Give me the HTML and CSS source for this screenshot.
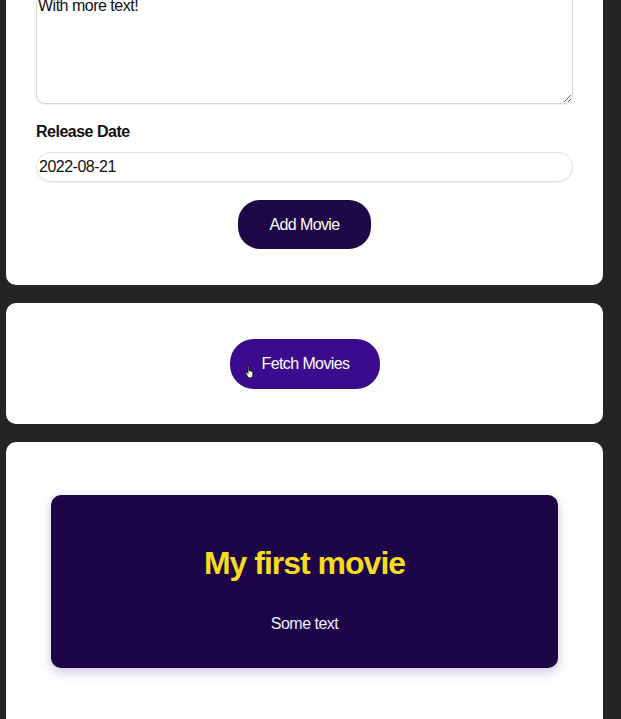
FILE: index.html
```html
<!DOCTYPE html>
<html>
<head>
<meta charset="utf-8">
<link rel="stylesheet" href="styles.css">
</head>
<body>
<div class="page">
  <section class="card form-card">
    <textarea class="textarea">With more text!</textarea>
    <label class="label">Release Date</label>
    <input class="input" type="text" value="2022-08-21">
    <div class="actions">
      <button class="btn btn-dark">Add Movie</button>
    </div>
  </section>
  <section class="card fetch-card">
    <button class="btn btn-fetch">
      Fetch Movies
      <svg class="cursor" width="11" height="14" viewBox="0 0 11 14">
        <path d="M3 1.2c.6 0 1 .4 1 1v4.3l.4-.1c.5 0 .9.3.9.7l.4-.1c.5 0 .8.3.9.7l.4-.1c.5 0 .9.4.9.9v2.6c0 1.6-1.2 2.9-2.8 2.9H5c-1 0-1.8-.5-2.3-1.3L.9 9.6c-.3-.5-.1-1 .3-1.2.4-.2.8-.1 1.1.2l.7.8V2.2c0-.6.4-1 1-1z" fill="#fff" stroke="#111" stroke-width="0.9"/>
      </svg>
    </button>
  </section>
  <section class="card list-card">
    <article class="movie">
      <h2 class="movie-title">My first movie</h2>
      <p class="movie-text">Some text</p>
    </article>
  </section>
</div>
</body>
</html>
```
FILE: styles.css
```css
* { box-sizing: border-box; }
html, body {
  margin: 0;
  padding: 0;
  background: #242424;
  height: 100%;
  overflow: hidden;
}
body {
  font-family: "Liberation Sans", Arial, sans-serif;
  color: #111;
}
.page {
  margin-top: -26px;
  padding-left: 6px;
  width: 603px;
  display: flex;
  flex-direction: column;
  gap: 18px;
}
.card {
  background: #fff;
  border-radius: 10px;
}
.form-card {
  padding: 20px 30px 36px;
  display: flex;
  flex-direction: column;
}
.textarea {
  display: block;
  width: 100%;
  height: 110px;
  border: 1px solid #d9d9d9;
  border-radius: 9px;
  padding: 2px 1px;
  font-family: "Liberation Sans", Arial, sans-serif;
  font-size: 16px;
  letter-spacing: -0.5px;
  color: #111;
  resize: vertical;
  box-shadow: 0 1px 2px rgba(0,0,0,0.08);
}
.label {
  margin-top: 18px;
  font-weight: bold;
  font-size: 16px;
  letter-spacing: -0.5px;
  line-height: 20px;
}
.input {
  margin-top: 10px;
  width: 100%;
  height: 30px;
  border: 1px solid #e0e0e0;
  border-radius: 15px;
  padding: 0 2px;
  font-family: "Liberation Sans", Arial, sans-serif;
  font-size: 16px;
  letter-spacing: -0.5px;
  color: #111;
  box-shadow: 0 1px 2px rgba(0,0,0,0.06);
}
.actions {
  margin-top: 18px;
  display: flex;
  justify-content: center;
}
.btn {
  border: none;
  color: #fff;
  font-family: "Liberation Sans", Arial, sans-serif;
  font-size: 16px;
  letter-spacing: -0.6px;
  border-radius: 22px;
}
.btn-dark {
  width: 133px;
  height: 49px;
  background: #1e0746;
}
.fetch-card {
  height: 121px;
  display: flex;
  align-items: center;
  justify-content: center;
}
.btn-fetch {
  position: relative;
  width: 150px;
  height: 50px;
  background: #3a0b8d;
  border-radius: 24px;
  padding-left: 8px;
}
.cursor {
  position: absolute;
  left: 15px;
  top: 25px;
}
.list-card {
  height: 300px;
  padding: 53px 45px 0;
}
.movie {
  height: 173px;
  background: #1c0546;
  border-radius: 10px;
  box-shadow: 0 4px 12px rgba(60, 20, 120, 0.25);
  display: flex;
  flex-direction: column;
  align-items: center;
}
.movie-title {
  margin: 50px 0 0;
  font-size: 32px;
  line-height: 36px;
  letter-spacing: -1px;
  font-weight: bold;
  color: #f6dc20;
}
.movie-text {
  margin: 34px 0 0;
  font-size: 16px;
  letter-spacing: -0.5px;
  color: #f3ecff;
}
```
